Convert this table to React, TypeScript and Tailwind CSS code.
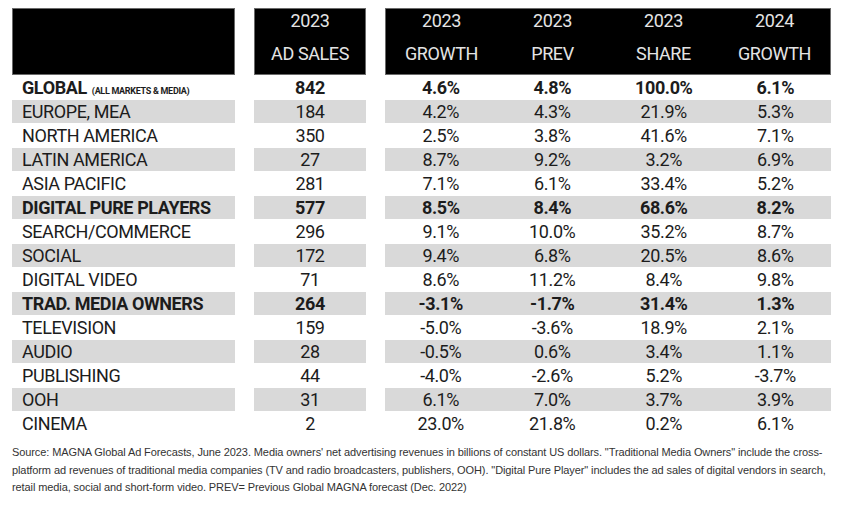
type Row = {
  label: string;
  sales: string;
  growth: string;
  prev: string;
  share: string;
  next: string;
  bold?: boolean;
  note?: string;
};

const rows: Row[] = [
  { label: "GLOBAL", note: "(ALL MARKETS & MEDIA)", sales: "842", growth: "4.6%", prev: "4.8%", share: "100.0%", next: "6.1%", bold: true },
  { label: "EUROPE, MEA", sales: "184", growth: "4.2%", prev: "4.3%", share: "21.9%", next: "5.3%" },
  { label: "NORTH AMERICA", sales: "350", growth: "2.5%", prev: "3.8%", share: "41.6%", next: "7.1%" },
  { label: "LATIN AMERICA", sales: "27", growth: "8.7%", prev: "9.2%", share: "3.2%", next: "6.9%" },
  { label: "ASIA PACIFIC", sales: "281", growth: "7.1%", prev: "6.1%", share: "33.4%", next: "5.2%" },
  { label: "DIGITAL PURE PLAYERS", sales: "577", growth: "8.5%", prev: "8.4%", share: "68.6%", next: "8.2%", bold: true },
  { label: "SEARCH/COMMERCE", sales: "296", growth: "9.1%", prev: "10.0%", share: "35.2%", next: "8.7%" },
  { label: "SOCIAL", sales: "172", growth: "9.4%", prev: "6.8%", share: "20.5%", next: "8.6%" },
  { label: "DIGITAL VIDEO", sales: "71", growth: "8.6%", prev: "11.2%", share: "8.4%", next: "9.8%" },
  { label: "TRAD. MEDIA OWNERS", sales: "264", growth: "-3.1%", prev: "-1.7%", share: "31.4%", next: "1.3%", bold: true },
  { label: "TELEVISION", sales: "159", growth: "-5.0%", prev: "-3.6%", share: "18.9%", next: "2.1%" },
  { label: "AUDIO", sales: "28", growth: "-0.5%", prev: "0.6%", share: "3.4%", next: "1.1%" },
  { label: "PUBLISHING", sales: "44", growth: "-4.0%", prev: "-2.6%", share: "5.2%", next: "-3.7%" },
  { label: "OOH", sales: "31", growth: "6.1%", prev: "7.0%", share: "3.7%", next: "3.9%" },
  { label: "CINEMA", sales: "2", growth: "23.0%", prev: "21.8%", share: "0.2%", next: "6.1%" },
];

const headers = [
  ["2023", "GROWTH"],
  ["2023", "PREV"],
  ["2023", "SHARE"],
  ["2024", "GROWTH"],
];

function HeaderCell({ top, bottom }: { top: string; bottom: string }) {
  return (
    <div className="flex flex-col items-center pt-[1px] text-[18px] tracking-[-0.4px] text-[#e4e4e4]">
      <div className="h-[22px] leading-[22px]">{top}</div>
      <div className="mt-[11px] h-[22px] leading-[22px]">{bottom}</div>
    </div>
  );
}

export default function App() {
  return (
    <div
      className="w-[868px] h-[511px] bg-white pt-[8px] pl-[12px] text-[#1c1c1c]"
      style={{ fontFamily: "Roboto, 'Liberation Sans', sans-serif" }}
    >
      <div className="flex h-[67px]">
        <div className="w-[223px] bg-black border border-[#6a6a6a]" />
        <div className="ml-[19px] w-[112px] bg-black border border-[#6a6a6a]">
          <HeaderCell top="2023" bottom="AD SALES" />
        </div>
        <div className="ml-[19px] w-[446px] bg-black border border-[#6a6a6a] grid grid-cols-4">
          {headers.map(([t, b], i) => (
            <HeaderCell key={i} top={t} bottom={b} />
          ))}
        </div>
      </div>

      {rows.map((r, i) => {
        const band = i % 2 === 1 ? "bg-[#d9d9d9]" : "";
        const weight = r.bold ? "font-bold" : "";
        return (
          <div key={r.label} className={`flex h-[24px] pt-[1px] text-[18px] tracking-[-0.4px] ${weight}`}>
            <div className={`w-[223px] h-[23px] pl-[10px] flex items-baseline leading-[23px] ${band}`}>
              <span>{r.label}</span>
              {r.note && <span className="ml-[5px] text-[9px] tracking-[-0.3px] font-bold">{r.note}</span>}
            </div>
            <div className={`ml-[19px] w-[112px] h-[23px] text-center leading-[23px] ${band}`}>
              {r.sales}
            </div>
            <div className={`ml-[19px] w-[446px] h-[23px] grid grid-cols-4 text-center leading-[23px] ${band}`}>
              <div>{r.growth}</div>
              <div>{r.prev}</div>
              <div>{r.share}</div>
              <div>{r.next}</div>
            </div>
          </div>
        );
      })}

      <div
        className="mt-[9px] text-[11px] leading-[17.5px] tracking-[-0.1px] text-[#333] whitespace-nowrap"
        style={{ fontFamily: "'Liberation Sans', Arial, sans-serif" }}
      >
        <div>
          Source: MAGNA Global Ad Forecasts, June 2023. Media owners' net advertising revenues in billions of constant US dollars. "Traditional Media Owners" include the cross-
        </div>
        <div>
          platform ad revenues of traditional media companies (TV and radio broadcasters, publishers, OOH). "Digital Pure Player" includes the ad sales of digital vendors in search,
        </div>
        <div>retail media, social and short-form video. PREV= Previous Global MAGNA forecast (Dec. 2022)</div>
      </div>
    </div>
  );
}
